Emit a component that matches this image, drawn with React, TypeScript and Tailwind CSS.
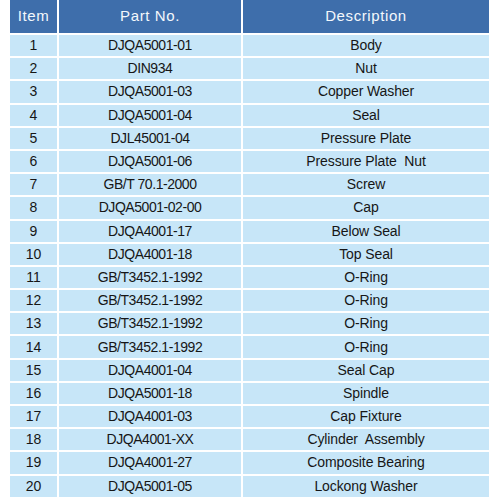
const ROWS: [string, string, string][] = [
  ["1", "DJQA5001-01", "Body"],
  ["2", "DIN934", "Nut"],
  ["3", "DJQA5001-03", "Copper Washer"],
  ["4", "DJQA5001-04", "Seal"],
  ["5", "DJL45001-04", "Pressure Plate"],
  ["6", "DJQA5001-06", "Pressure Plate  Nut"],
  ["7", "GB/T 70.1-2000", "Screw"],
  ["8", "DJQA5001-02-00", "Cap"],
  ["9", "DJQA4001-17", "Below Seal"],
  ["10", "DJQA4001-18", "Top Seal"],
  ["11", "GB/T3452.1-1992", "O-Ring"],
  ["12", "GB/T3452.1-1992", "O-Ring"],
  ["13", "GB/T3452.1-1992", "O-Ring"],
  ["14", "GB/T3452.1-1992", "O-Ring"],
  ["15", "DJQA4001-04", "Seal Cap"],
  ["16", "DJQA5001-18", "Spindle"],
  ["17", "DJQA4001-03", "Cap Fixture"],
  ["18", "DJQA4001-XX", "Cylinder  Assembly"],
  ["19", "DJQA4001-27", "Composite Bearing"],
  ["20", "DJQA5001-05", "Lockong Washer"],
]

export default function App() {
  return (
    <div className="w-[500px] h-[500px] bg-white overflow-hidden font-['Liberation_Sans',Arial,sans-serif]">
      <div className="ml-[10px] w-[479px] grid grid-cols-[47px_182px_246px] gap-[2px] bg-white">
        {["Item", "Part No.", "Description"].map((h) => (
          <div
            key={h}
            className="h-[33px] bg-[#3e6eab] text-[#f4f8fc] text-[15px] tracking-[0.04em] flex items-center justify-center"
          >
            {h}
          </div>
        ))}
        {ROWS.map(([n, part, desc]) => (
          <>
            <div key={n + "a"} className="h-[21.2px] bg-[#c7e6f8] text-[#161616] text-[14px] flex items-center justify-center">
              {n}
            </div>
            <div key={n + "b"} className="h-[21.2px] bg-[#c7e6f8] text-[#161616] text-[14px] tracking-[-0.45px] flex items-center justify-center">
              {part}
            </div>
            <div key={n + "c"} className="h-[21.2px] bg-[#c7e6f8] text-[#161616] text-[14px] tracking-[-0.1px] flex items-center justify-center whitespace-pre">
              {desc}
            </div>
          </>
        ))}
      </div>
    </div>
  )
}
